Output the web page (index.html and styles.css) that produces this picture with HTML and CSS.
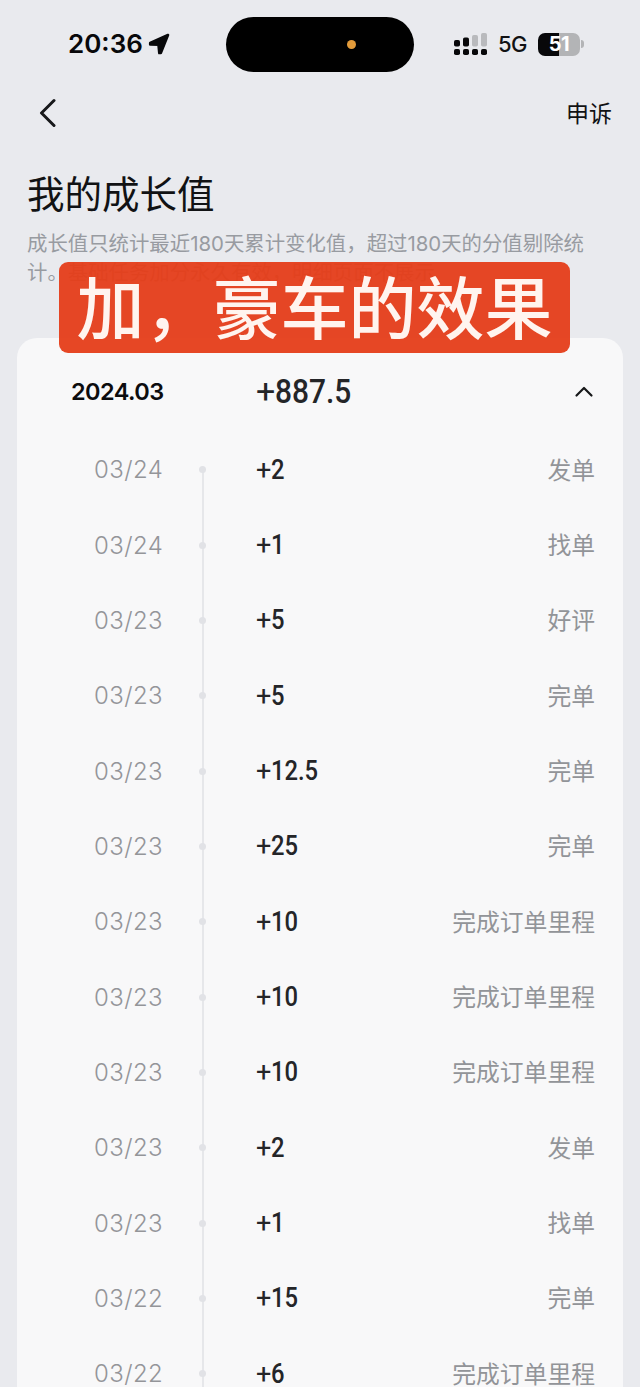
FILE: index.html
```html
<!DOCTYPE html>
<html lang="zh-CN">
<head>
<meta charset="utf-8">
<title>我的成长值</title>
<link rel="stylesheet" href="styles.css">
</head>
<body>
<div class="screen">
  <header class="status">
    <div class="clock"><span class="time">20:36</span>
      <svg class="arrow" width="22" height="22" viewBox="0 0 22 22"><path d="M20 2 2.200 10v1.500l8.300.3.800 8.200h1.500Z"/></svg>
    </div>
    <div class="island"><span class="mic-dot"></span></div>
    <div class="signals">
      <svg class="cell" width="34" height="24" viewBox="0 0 34 24">
        <g fill="#08080a"><rect x="0" y="8" width="6" height="6.500" rx="1.800"/><rect x="9" y="5.500" width="6" height="9" rx="1.800"/><rect x="0" y="17" width="6" height="6" rx="1.800"/><rect x="9" y="17" width="6" height="6" rx="1.800"/><rect x="18" y="17" width="6" height="6" rx="1.800"/><rect x="27" y="17" width="6" height="6" rx="1.800"/></g>
        <g fill="#b9babd"><rect x="18" y="3" width="6" height="11.500" rx="1.800"/><rect x="27" y="1" width="6" height="13.500" rx="1.800"/></g>
      </svg>
      <span class="net">5G</span>
      <div class="battery"><span class="level">51</span><i class="cap"></i></div>
    </div>
  </header>
  <nav class="nav">
    <svg class="back" width="18" height="30" viewBox="0 0 18 30"><path d="M16 2.500 3.500 15 16 27.500"/></svg>
    <a class="appeal">申诉</a>
  </nav>
  <section class="intro">
    <h1 class="title">我的成长值</h1>
    <p class="desc">成长值只统计最近<span class="n">180</span>天累计变化值，超过<span class="n">180</span>天的分值剔除统<br>计。基础任务加分永久有效，明细页面不展示</p>
    <div class="banner">加，豪车的效果</div>
  </section>
  <main class="card">
    <div class="month">
      <span class="month-name">2024.03</span>
      <span class="total"><b class="plus">+</b><b class="num">887.5</b></span>
      <svg class="fold" width="20" height="14" viewBox="0 0 20 14"><path d="M2.500 10.500 10 3l7.500 7.500"/></svg>
    </div>
    <ul class="list">
      <li class="row"><span class="date">03/24</span><i class="dot"></i><span class="value"><b class="plus">+</b><b class="num">2</b></span><span class="kind">发单</span></li>
      <li class="row"><span class="date">03/24</span><i class="dot"></i><span class="value"><b class="plus">+</b><b class="num">1</b></span><span class="kind">找单</span></li>
      <li class="row"><span class="date">03/23</span><i class="dot"></i><span class="value"><b class="plus">+</b><b class="num">5</b></span><span class="kind">好评</span></li>
      <li class="row"><span class="date">03/23</span><i class="dot"></i><span class="value"><b class="plus">+</b><b class="num">5</b></span><span class="kind">完单</span></li>
      <li class="row"><span class="date">03/23</span><i class="dot"></i><span class="value"><b class="plus">+</b><b class="num">12.5</b></span><span class="kind">完单</span></li>
      <li class="row"><span class="date">03/23</span><i class="dot"></i><span class="value"><b class="plus">+</b><b class="num">25</b></span><span class="kind">完单</span></li>
      <li class="row"><span class="date">03/23</span><i class="dot"></i><span class="value"><b class="plus">+</b><b class="num">10</b></span><span class="kind">完成订单里程</span></li>
      <li class="row"><span class="date">03/23</span><i class="dot"></i><span class="value"><b class="plus">+</b><b class="num">10</b></span><span class="kind">完成订单里程</span></li>
      <li class="row"><span class="date">03/23</span><i class="dot"></i><span class="value"><b class="plus">+</b><b class="num">10</b></span><span class="kind">完成订单里程</span></li>
      <li class="row"><span class="date">03/23</span><i class="dot"></i><span class="value"><b class="plus">+</b><b class="num">2</b></span><span class="kind">发单</span></li>
      <li class="row"><span class="date">03/23</span><i class="dot"></i><span class="value"><b class="plus">+</b><b class="num">1</b></span><span class="kind">找单</span></li>
      <li class="row"><span class="date">03/22</span><i class="dot"></i><span class="value"><b class="plus">+</b><b class="num">15</b></span><span class="kind">完单</span></li>
      <li class="row"><span class="date">03/22</span><i class="dot"></i><span class="value"><b class="plus">+</b><b class="num">6</b></span><span class="kind">完成订单里程</span></li>
    </ul>
  </main>
</div>
</body>
</html>
```
FILE: styles.css
```css
* { box-sizing: border-box; }
body { margin: 0; background: #e9eaee; }
.screen {
  width: 640px; height: 1387px; overflow: hidden;
  display: flex; flex-direction: column;
  background: #e9eaee; color: #111214;
  font-family: Inter, "Noto Sans CJK SC", sans-serif;
}
.status {
  height: 88px; flex: none;
  display: grid; grid-template-columns: 226px 188px 1fr; align-items: center;
}
.clock { display: flex; align-items: center; padding-left: 68px; gap: 5px; }
.time { font-size: 26px; font-weight: 600; letter-spacing: 0; line-height: 30px; color: #08080a; }
.arrow { fill: #08080a; stroke: #08080a; stroke-width: 2.6; stroke-linejoin: round; }
.island {
  height: 55px; border-radius: 28px; background: #000;
  display: flex; align-items: center; padding-left: 121px;
}
.mic-dot { width: 9px; height: 9px; border-radius: 50%; background: #e39b3a; }
.signals { display: flex; align-items: center; padding-left: 40px; }
.net { font-size: 22px; font-weight: 500; margin-left: 10px; width: 40px; line-height: 30px; letter-spacing: -0.6px; }
.battery { display: flex; align-items: center; gap: 1px; }
.level {
  width: 42px; height: 23px; border-radius: 7px; line-height: 23px; text-align: center;
  background: linear-gradient(90deg, #08080a 51%, #b3b4b6 51%);
  color: #fff; font-size: 20px; font-weight: 700; letter-spacing: -0.5px;
}
.cap { width: 3px; height: 8px; border-radius: 0 3px 3px 0; background: #b3b4b6; }
.nav {
  height: 50px; flex: none; display: flex; align-items: center; justify-content: space-between;
  padding: 0 28px 0 38px;
}
.back, .fold { fill: none; stroke: #17181a; stroke-width: 3; stroke-linecap: round; stroke-linejoin: round; }
.fold { stroke-width: 2.2; }
.appeal { font-size: 23px; line-height: 32px; padding-top: 1px; }
.intro { height: 200px; flex: none; padding: 30px 27px 0; position: relative; }
.title { margin: 0; font-size: 37.500px; line-height: 54px; font-weight: 400; }
.desc { margin: 8px 0 0; font-size: 20.400px; line-height: 28.500px; color: #989ba1; white-space: nowrap; font-weight: 400; }
.n { letter-spacing: 0; }
.banner {
  position: absolute; left: 59px; top: 124px; width: 511px; height: 91px;
  border-radius: 9px; background: rgba(229, 61, 25, 0.95); color: #fff4ef;
  font-size: 68px; line-height: 94px; font-weight: 500; text-align: center; white-space: nowrap;
}
.card {
  flex: none; width: 606px; height: 1060px; margin-left: 17px;
  border-radius: 20px 20px 0 0; background: #f8f8f9;
}
.month {
  height: 94px; padding-top: 13px;
  display: grid; grid-template-columns: 54px 185px 1fr 20px 29px; align-items: center;
}
.month-name { grid-column: 2; font-size: 23.500px; font-weight: 600; letter-spacing: -0.55px; color: #0c0c0e; }
.total, .value { display: flex; align-items: baseline; color: #242528; font-family: Roboto, sans-serif; }
.total { font-size: 34px; padding-bottom: 2px; }
.value { font-size: 27px; }
.plus { font-weight: 400; }
.num { font-weight: 500; transform: scaleX(0.88); transform-origin: 0 50%; }
.list {
  list-style: none; margin: 0; padding: 0;
  background: linear-gradient(#e6e7ea, #e6e7ea) 185px 38px / 2px 100% no-repeat;
}
.row {
  height: 75.350px; padding-right: 28px;
  display: grid; grid-template-columns: 77px 105px 57px 1fr auto; align-items: center;
}
.date { grid-column: 2; font-size: 24px; font-weight: 350; color: #949599; letter-spacing: 0.4px; }
.dot { width: 7px; height: 7px; border-radius: 50%; background: #e1e2e6; }
.kind { font-size: 23.800px; line-height: 34px; padding-top: 2px; font-weight: 400; color: #929498; }
```
